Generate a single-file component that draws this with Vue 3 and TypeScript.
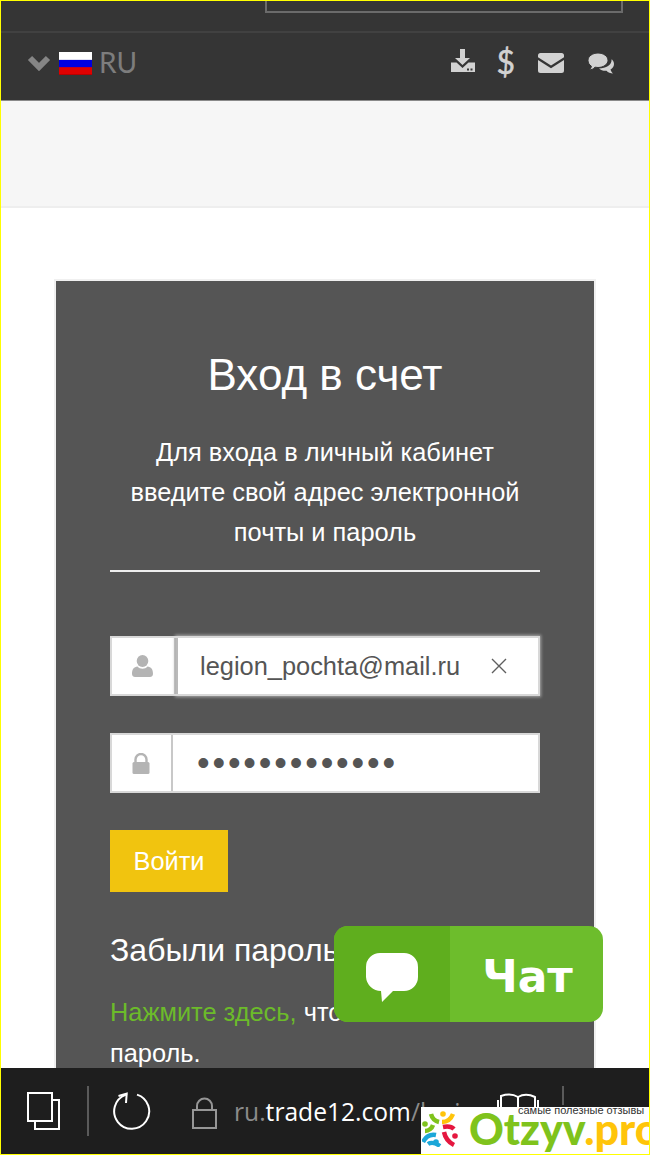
<script setup lang="ts">
const passwordDots: string = '•'.repeat(13)
</script>

<template>
  <div class="frame">
    <header class="topbar">
      <div class="search-strip"><div class="search-box"></div></div>
      <div class="lang-row">
        <div class="lang">
          <svg class="chevron" width="24" height="16" viewBox="0 0 24 16">
            <polyline points="3,3 12,12 21,3" fill="none" stroke="#858585" stroke-width="6" />
          </svg>
          <span class="flag"></span>
          <span class="lang-code">RU</span>
        </div>
        <div class="tools">
          <svg class="tool-download" width="26" height="24" viewBox="0 0 26 24" fill="#d2d2d2">
            <path d="M10 0h5v9h5l-7.5 7L5 9h5z" />
            <path d="M1 13.5h5.5l6 5.5 6-5.5H25V23H1z" />
            <rect x="17" y="19.5" width="2" height="2" fill="#353535" />
            <rect x="20.5" y="19.5" width="2" height="2" fill="#353535" />
          </svg>
          <span class="dollar">$</span>
          <svg width="26" height="20" viewBox="0 0 26 20" fill="#d2d2d2">
            <path d="M2.5 0h21A2.5 2.5 0 0 1 26 2.5v1.7L13 12.5 0 4.2V2.5A2.5 2.5 0 0 1 2.5 0z" />
            <path d="M0 7l13 8.2L26 7v10.5a2.5 2.5 0 0 1-2.5 2.5h-21A2.5 2.5 0 0 1 0 17.500z" />
          </svg>
          <svg width="27" height="22" viewBox="0 0 27 22">
            <path d="M25 7.500c1.500 1.500 2 3 2 4.500 0 2.500-1.500 4.500-3.500 5.500.3 1.500 1.500 3 2.500 4-2.500 0-5-1-6.500-2.700-3 .3-5.500-.5-7.500-2.300 7 0 13-3.500 12.500-9z" fill="#d2d2d2" />
            <path d="M11 1c5.500 0 10 3.300 10 7.300s-4.500 7.200-10 7.200c-1 0-2-.1-3-.3C6.500 17 4.500 17.800 2.500 18c1-1 1.700-2.300 1.900-3.800C2.100 12.900 1 10.700 1 8.300 1 4.300 5.500 1 11 1z" fill="#d2d2d2" stroke="#353535" stroke-width="1" />
          </svg>
        </div>
      </div>
    </header>

    <div class="promo"></div>

    <main class="content">
      <section class="card">
        <h1 class="title">Вход в счет</h1>
        <p class="intro">Для входа в личный кабинет<br />введите свой адрес электронной<br />почты и пароль</p>
        <hr class="rule" />

        <div class="field field-active">
          <div class="addon addon-user">
            <svg width="21" height="22" viewBox="0 0 21 22" fill="#b4b4b4">
              <ellipse cx="10.500" cy="6" rx="5.800" ry="6" />
              <path d="M0 19c0-5 2-7 5.500-7.500 1.300 1.500 3 2.200 5 2.200s3.700-.7 5-2.200C19 12 21 14 21 19c0 2-1.500 3-3 3H3c-1.500 0-3-1-3-3z" />
            </svg>
          </div>
          <div class="value">
            <span>legion_pochta@mail.ru</span>
            <svg class="clear" width="16" height="16" viewBox="0 0 16 16">
              <path d="M1 1l14 14M15 1L1 15" stroke="#5f5f5f" stroke-width="1.400" />
            </svg>
          </div>
        </div>

        <div class="field">
          <div class="addon addon-lock">
            <svg width="18" height="21" viewBox="0 0 18 21">
              <path d="M3.500 10V6.500a5.500 5.500 0 0 1 11 0V10" fill="none" stroke="#b4b4b4" stroke-width="2.400" />
              <rect x="0.500" y="9" width="17" height="12" rx="1.500" fill="#b4b4b4" />
            </svg>
          </div>
          <div class="value value-dots">{{ passwordDots }}</div>
        </div>

        <button class="submit" type="button">Войти</button>

        <h2 class="forgot">Забыли пароль?</h2>
        <p class="hint"><span class="hint-link">Нажмите здесь,</span> чтобы изменить пароль.</p>
      </section>
    </main>

    <footer class="browser-bar">
      <svg class="tabs-icon" width="33" height="38" viewBox="0 0 33 38" fill="none" stroke="#fff" stroke-width="2">
        <rect x="1" y="1" width="24" height="28" fill="#1e1e1e" />
        <path d="M25 8h7v29H8v-8" />
      </svg>
      <span class="bar-divider"></span>
      <svg class="reload" width="38" height="40" viewBox="0 0 38 40" fill="none" stroke="#fff" stroke-width="2">
        <path d="M24 3.600A17.500 17.500 0 1 1 12.500 3.900L13.700 2.700" />
        <path d="M5.500 5L13.700 2.700L13 12" />
      </svg>
      <svg class="lock" width="26" height="34" viewBox="0 0 26 34" fill="none" stroke="#969696" stroke-width="2">
        <rect x="1" y="14" width="23" height="18" />
        <path d="M5 14V10a7.500 7.500 0 0 1 15 0v4" />
      </svg>
      <span class="url"><span class="url-sub">ru.</span>trade12.com<span class="url-sub">/login</span></span>
      <svg class="book" width="42" height="24" viewBox="0 0 42 24" fill="none" stroke="#fff" stroke-width="2">
        <path d="M4 23V3c6-2 12-2 17 1 5-3 11-3 17 0v19" />
        <path d="M21 4v19" />
        <path d="M1 7v16M41 7v16" />
      </svg>
      <span class="bar-divider bar-divider-end"></span>
    </footer>

    <div class="chat">
      <div class="chat-icon">
        <svg width="52" height="50" viewBox="0 0 52 50">
          <path d="M14 0h24a14 14 0 0 1 14 14v10a14 14 0 0 1-14 14H27L16 49l-1-11A15 15 0 0 1 0 24V14A14 14 0 0 1 14 0z" fill="#fff" />
        </svg>
      </div>
      <div class="chat-label">Чат</div>
    </div>

    <div class="otzyv">
      <svg class="otzyv-logo" width="36" height="36" viewBox="0 0 36 36" fill="none" stroke-width="4.500">
        <path d="M9 3c1 4 4 7 8 8" stroke="#7fc31c" />
        <path d="M31 3c-2 5-6 8-11 8" stroke="#ffc40a" />
        <circle cx="21" cy="3" r="2.800" fill="#ffc40a" stroke="none" />
        <circle cx="3" cy="13" r="2.800" fill="#7fc31c" stroke="none" />
        <path d="M3 20c4 0 7-3 8-6" stroke="#7fc31c" />
        <path d="M1 31c3-6 8-8 13-7" stroke="#1ca7d8" />
        <path d="M6 33c3-2 8-1 12 2" stroke="#1ca7d8" />
        <circle cx="14" cy="31" r="2.800" fill="#1ca7d8" stroke="none" />
        <path d="M21 16c5-1 9 0 11 2" stroke="#e5173f" />
        <path d="M22 21c1 5 4 10 10 13" stroke="#e5173f" />
        <circle cx="33" cy="25" r="2.800" fill="#e5173f" stroke="none" />
      </svg>
      <div class="otzyv-text">
        <span class="otzyv-tagline">самые полезные отзывы</span>
        <span class="otzyv-name">Otzyv<span class="otzyv-tld">.pro</span></span>
      </div>
    </div>
  </div>
</template>

<style scoped>
.frame {
  position: relative;
  box-sizing: border-box;
  width: 650px;
  height: 1155px;
  border: 1px solid #ffff00;
  display: flex;
  flex-direction: column;
  overflow: hidden;
  background: #fff;
  font-family: "Liberation Sans", Arial, sans-serif;
}

.topbar {
  flex: none;
  height: 99px;
  background: #353535;
  border-bottom: 1px solid #8a8a8a;
}

.search-strip {
  height: 30px;
  border-bottom: 2px solid #414141;
}

.search-box {
  box-sizing: border-box;
  width: 358px;
  height: 12px;
  margin-left: 264px;
  border: 2px solid #6b6b6b;
  border-top: 0;
}

.lang-row {
  height: 67px;
  display: flex;
  align-items: center;
  justify-content: space-between;
  padding: 0 35px 8px 26px;
  box-sizing: border-box;
}

.lang {
  display: flex;
  align-items: center;
  margin-bottom: 2px;
}

.chevron {
  margin-top: 3px;
}

.flag {
  width: 33px;
  height: 23px;
  margin: 3px 7px 0 8px;
  background: linear-gradient(#fff 0 30%, #dcdcf0 33%, #0000e0 36% 64%, #e00000 68% 94%, #a00000 100%);
}

.lang-code {
  font-family: Lato, sans-serif;
  font-size: 28px;
  line-height: 34px;
  color: #7d7d7d;
}

.tools {
  display: flex;
  align-items: center;
  gap: 23px;
}

.tool-download {
  margin: 0 -3px 4px 0;
}

.dollar {
  margin-bottom: 1px;
  font-family: Lato, sans-serif;
  font-weight: 400;
  font-size: 32px;
  line-height: 30px;
  color: #d2d2d2;
  -webkit-text-stroke: 0.5px #d2d2d2;
}

.promo {
  flex: none;
  height: 105px;
  background: #f6f6f6;
  border-bottom: 2px solid #eeeeee;
}

.content {
  flex: 1;
  min-height: 0;
  overflow: hidden;
  padding: 73px 55px 0;
}

.card {
  background: #555555;
  box-shadow: 0 0 0 2px #f0f0f0;
  padding: 71px 54px 0;
  color: #fff;
}

.title {
  margin: 0 0 34px;
  font-size: 44px;
  line-height: 46px;
  font-weight: 400;
  text-align: center;
}

.intro {
  margin: 0;
  font-size: 25.4px;
  line-height: 40px;
  text-align: center;
}

.rule {
  margin: 18px 0 64px;
  height: 2px;
  border: 0;
  background: #eeeeee;
}

.field {
  display: flex;
  height: 60px;
  margin-bottom: 37px;
  background: #fff;
  color: #555555;
  outline: 2px solid #d8d8d8;
  outline-offset: -2px;
}

.addon {
  flex: none;
  display: flex;
  align-items: center;
  justify-content: center;
  box-sizing: border-box;
  border-right: 2px solid #c8c8c8;
}

.addon-user {
  width: 66px;
}

.addon-lock {
  width: 63px;
}

.value {
  flex: 1;
  display: flex;
  align-items: center;
  justify-content: space-between;
  padding: 0 33px 0 24px;
  font-size: 25.4px;
}

.field-active .value {
  box-shadow: 0 0 3px 1px #a9a9a9;
  outline: 2px solid #b9b9b9;
  outline-offset: -2px;
}

.value-dots {
  padding-left: 24px;
  font-size: 36px;
  letter-spacing: 2.850px;
  line-height: 60px;
  justify-content: flex-start;
}

.submit {
  display: block;
  width: 118px;
  height: 62px;
  padding: 0;
  border: 0;
  background: #f1c40f;
  color: #fff;
  font-family: inherit;
  font-size: 25.4px;
}

.forgot {
  margin: 38px 0 22px;
  font-size: 32px;
  line-height: 40px;
  font-weight: 400;
  white-space: nowrap;
}

.hint {
  margin: 0;
  font-size: 25.4px;
  line-height: 41px;
}

.hint-link {
  color: #6cbb2a;
}

.browser-bar {
  flex: none;
  height: 86px;
  background: #1e1e1e;
  display: flex;
  align-items: center;
  padding-left: 26px;
  color: #fff;
}

.tabs-icon {
  margin-right: 27px;
}

.bar-divider {
  flex: none;
  width: 2px;
  height: 50px;
  background: #5a5a5a;
}

.reload {
  margin-left: 24px;
}

.lock {
  margin: 4px 0 0 41px;
}

.url {
  flex: none;
  width: 243px;
  margin: 0 20px 0 16px;
  font-family: "Open Sans", sans-serif;
  font-size: 24.6px;
  white-space: nowrap;
}

.url-sub {
  color: #8b8b8b;
}

.book {
  flex: none;
  margin-bottom: 12px;
}

.bar-divider-end {
  margin-left: 23px;
  margin-bottom: 31px;
  height: 19px;
}

.chat {
  position: absolute;
  left: 333px;
  top: 925px;
  width: 269px;
  height: 96px;
  display: flex;
  border-radius: 14px;
  overflow: hidden;
  background: #6dbd2c;
  color: #fff;
}

.chat-icon {
  flex: none;
  width: 116px;
  background: #5fae1e;
  display: flex;
  align-items: center;
  justify-content: center;
  padding-top: 8px;
  box-sizing: border-box;
}

.chat-label {
  flex: 1;
  display: flex;
  align-items: center;
  justify-content: center;
  padding: 4px 0 0 2px;
  font-family: "DejaVu Sans", sans-serif;
  font-weight: 700;
  font-size: 44px;
}

.otzyv {
  position: absolute;
  left: 420px;
  right: 0;
  bottom: 0;
  height: 47px;
  background: #fff;
  display: flex;
  overflow: hidden;
}

.otzyv-logo {
  flex: none;
  margin: 4px 0 0 1px;
}

.otzyv-text {
  position: relative;
  flex: 1;
}

.otzyv-tagline {
  position: absolute;
  left: 60px;
  top: -3px;
  font-size: 11px;
  line-height: 12px;
  color: #333;
  white-space: nowrap;
}

.otzyv-name {
  position: absolute;
  left: 11px;
  top: 2px;
  font-family: Lato, sans-serif;
  font-weight: 900;
  font-size: 43px;
  line-height: 40px;
  color: #7fc31c;
  white-space: nowrap;
}

.otzyv-tld {
  color: #ffc40a;
}
</style>
